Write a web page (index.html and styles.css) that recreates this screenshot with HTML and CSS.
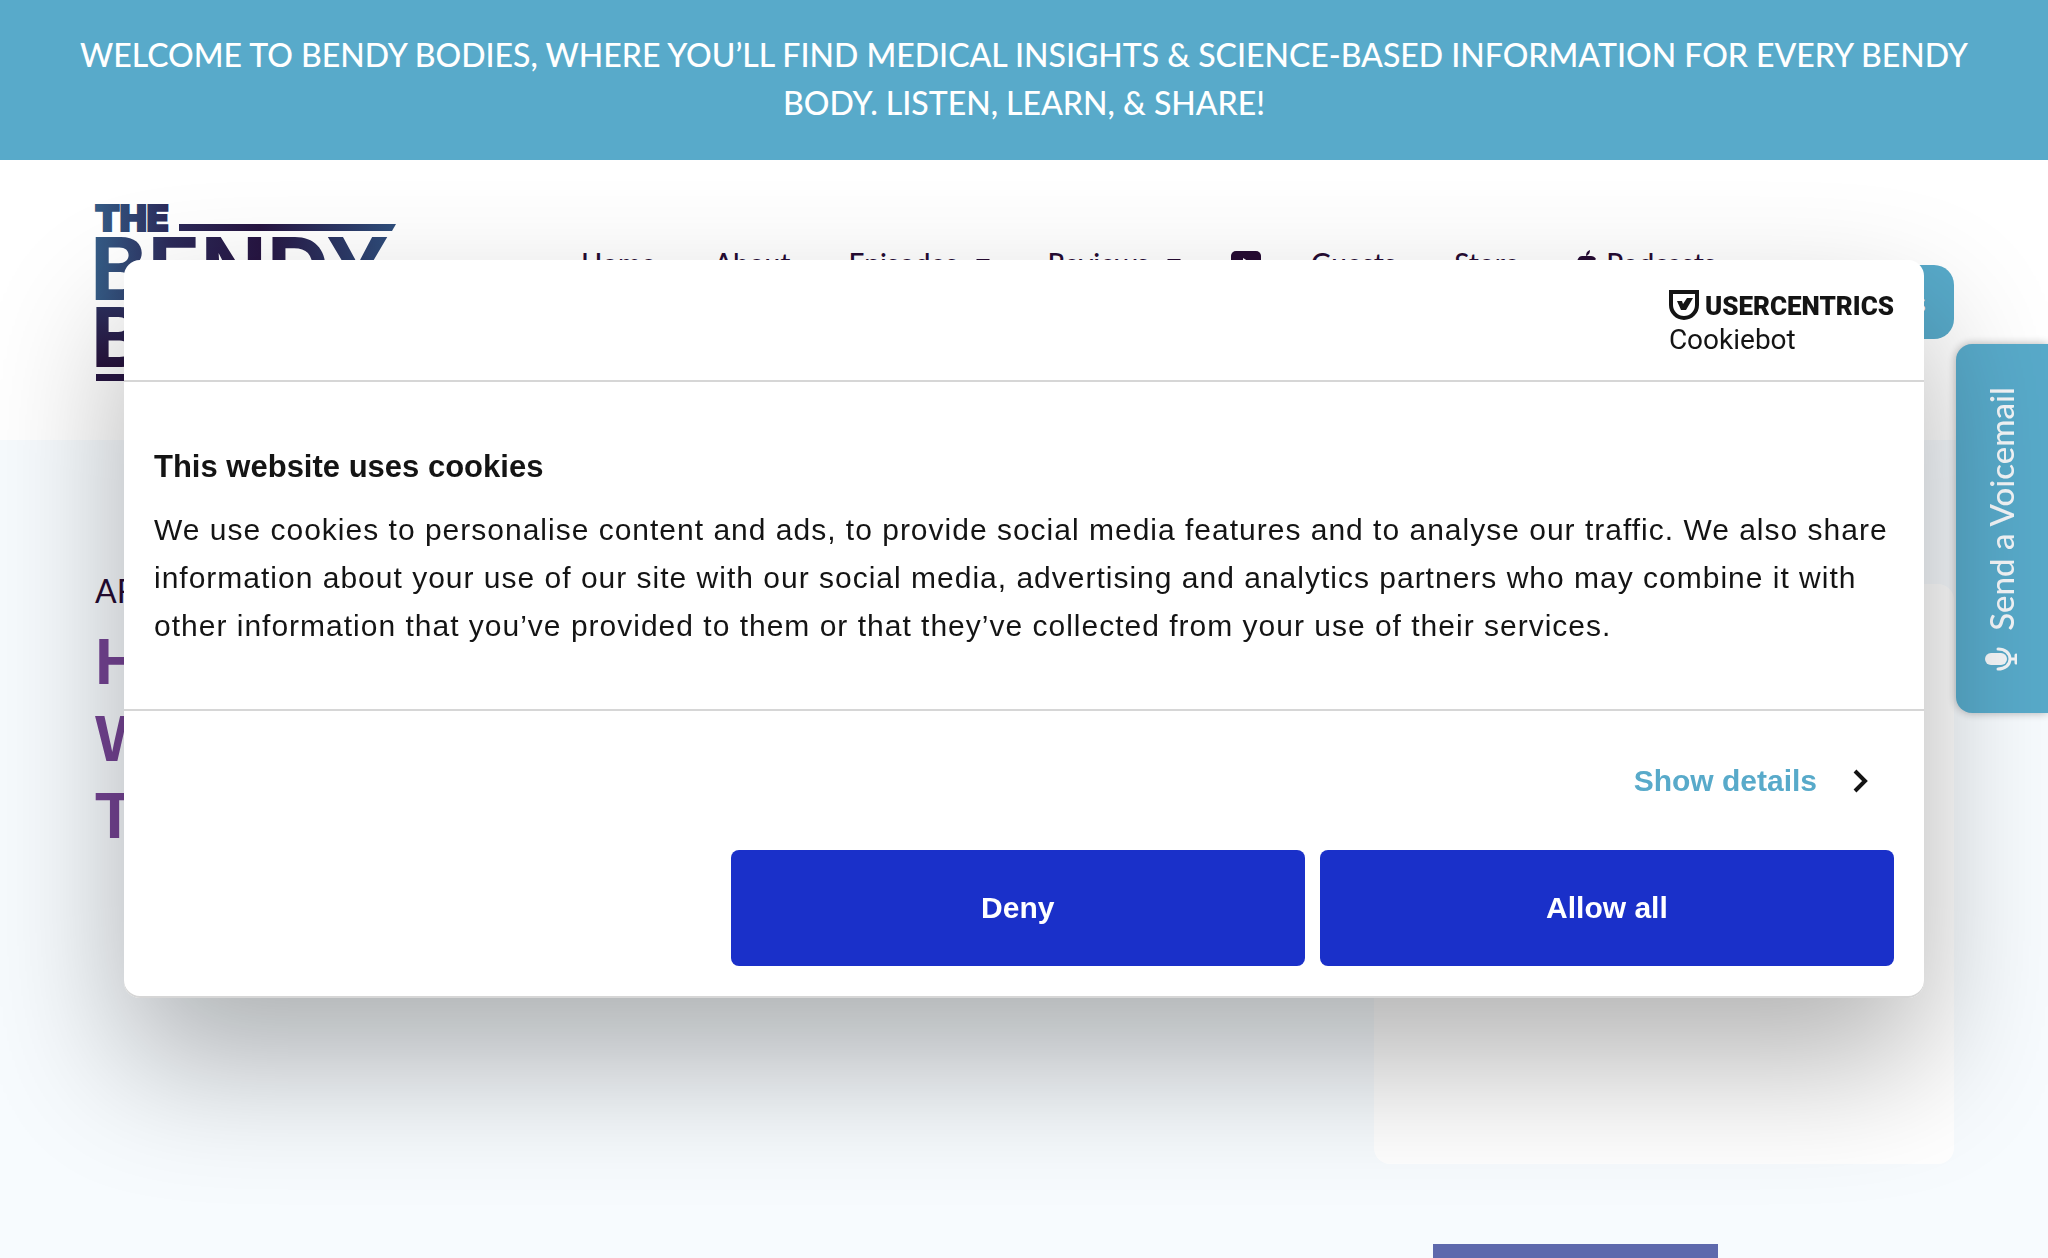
FILE: index.html
```html
<!DOCTYPE html>
<html lang="en">
<head>
<meta charset="utf-8">
<title>The Bendy Bodies Podcast</title>
<link rel="stylesheet" href="styles.css">
</head>
<body>
<div class="banner">WELCOME TO BENDY BODIES, WHERE YOU’LL FIND MEDICAL INSIGHTS &amp; SCIENCE-BASED INFORMATION FOR EVERY BENDY BODY. LISTEN, LEARN, &amp; SHARE!</div>
<header class="header">
  <a class="logo" href="#" aria-label="The Bendy Bodies">
    <svg width="304" height="180" viewBox="0 0 304 180">
      <defs>
        <linearGradient id="ink" gradientUnits="userSpaceOnUse" x1="0" y1="0" x2="300" y2="0">
          <stop offset="0" stop-color="#355c86"/><stop offset=".25" stop-color="#2c2a5a"/><stop offset=".55" stop-color="#271542"/><stop offset="1" stop-color="#2f4f7d"/>
        </linearGradient>
        <linearGradient id="ink-low" gradientUnits="userSpaceOnUse" x1="0" y1="104" x2="0" y2="168">
          <stop offset="0" stop-color="#2c2e5c"/><stop offset="1" stop-color="#271039"/>
        </linearGradient>
      </defs>
      <text class="logo-the" x="0" y="27" fill="url(#ink)" stroke="url(#ink)" stroke-width="2">THE</text>
      <path d="M84 20h217l-4 7H84z" fill="url(#ink)"/>
      <text class="logo-name" x="-5" y="96" fill="url(#ink)">BENDY</text>
      <text class="logo-name logo-low" x="-4" y="163" fill="url(#ink-low)">BODIES</text>
      <path d="M1 170h290v7H1z" fill="#271542"/>
    </svg>
  </a>
  <nav class="nav">
    <a href="#">Home</a>
    <a href="#">About</a>
    <a href="#">Episodes <i class="caret"></i></a>
    <a href="#">Reviews <i class="caret"></i></a>
    <a class="nav-icon" href="#" aria-label="YouTube"><svg width="30" height="24" viewBox="0 0 30 24"><rect width="30" height="24" rx="5" fill="#260b33"/><path d="M12 7l8 5-8 5z" fill="#fff"/></svg></a>
    <a href="#">Guests</a>
    <a href="#">Store</a>
    <a href="#"><svg class="apple" width="19" height="26" viewBox="0 0 19 26"><path d="M9 6C9 3 10 1 13 0c0 3-1 5-4 6zM5 6h9c2 0 4 1 5 3-3 2-3 7 0 9-2 5-4 7-6 7l-3-1-3 1c-4 0-7-6-7-11 0-5 2-8 5-8z" fill="#260b33"/></svg>Podcasts</a>
  </nav>
  <button class="follow" type="button">Follow Us</button>
</header>
<main class="hero">
  <div class="intro">
    <p class="kicker">ARTICLES</p>
    <h1 class="title">How<br>We<br>Talk</h1>
  </div>
  <aside class="side">
    <div class="card"></div>
    <div class="tile"></div>
  </aside>
</main>
<button class="voicemail" type="button">
  <svg width="32" height="24" viewBox="0 0 32 24"><rect x="0" y="6" width="22" height="12" rx="6" fill="#f4f6f8"/><path d="M13 2c7 0 12 4 12 10s-5 10-12 10M25 12h6M31 8v8" fill="none" stroke="#f4f6f8" stroke-width="3" stroke-linecap="round"/></svg>
  <span>Send a Voicemail</span>
</button>
<div class="dialog" role="dialog" aria-labelledby="cookie-title">
  <div class="dialog-head">
    <a class="vendor" href="#">
      <span class="vendor-top"><svg width="30" height="30" viewBox="0 0 30 30"><path d="M2 2h26v13a13 13 0 0 1-26 0z" fill="none" stroke="#141414" stroke-width="4"/><path d="M8 11h5l1 3 4-6h6l-7 12h-5z" fill="#141414"/></svg>USERCENTRICS</span>
      <span class="vendor-sub">Cookiebot</span>
    </a>
  </div>
  <div class="dialog-body">
    <h2 id="cookie-title">This website uses cookies</h2>
    <p>We use cookies to personalise content and ads, to provide social media features and to analyse our traffic. We also share information about your use of our site with our social media, advertising and analytics partners who may combine it with other information that you’ve provided to them or that they’ve collected from your use of their services.</p>
  </div>
  <div class="dialog-foot">
    <a class="details" href="#">Show details <svg width="16" height="24" viewBox="0 0 16 24"><path d="M2 2l10 10L2 22" fill="none" stroke="#141414" stroke-width="4"/></svg></a>
    <div class="actions">
      <button type="button">Deny</button>
      <button type="button">Allow all</button>
    </div>
  </div>
</div>
</body>
</html>
```
FILE: styles.css
```css
* { box-sizing: border-box; }
body {
  margin: 0;
  min-height: 100vh;
  display: flex;
  flex-direction: column;
  overflow: hidden;
  background: #f7fbfe;
  color: #260b33;
  font-family: "Noto Sans", sans-serif;
}
a { color: inherit; text-decoration: none; }
button { border: 0; font: inherit; cursor: pointer; }

.banner {
  padding: 31px 64px 33px;
  background: #58aaca;
  color: #fff;
  font-family: Lato, sans-serif;
  font-weight: 500;
  font-size: 32px;
  line-height: 48px;
  text-align: center;
}

.header {
  display: flex;
  align-items: flex-start;
  height: 280px;
  padding: 44px 94px 0 95px;
  background: #fff;
}
.logo svg { display: block; overflow: visible; }
.logo-the { font: 900 36px Inter, sans-serif; }
.logo-name { font: 700 87px Inter, sans-serif; }
.logo-low { font-size: 82px; }
.nav {
  display: flex;
  align-items: center;
  gap: 58px;
  height: 40px;
  margin: 39px auto 0 182px;
  font-family: Lato, sans-serif;
  font-weight: 500;
  font-size: 28px;
}
.nav a { display: flex; align-items: center; white-space: nowrap; }
.nav svg { display: block; }
.nav .nav-icon { margin: 0 -8px; }
.apple { margin-right: 10px; }
.caret {
  margin: 0 0 2px 18px;
  border: 7px solid transparent;
  border-top-color: #260b33;
  border-bottom: 0;
}
.follow {
  align-self: flex-start;
  height: 74px;
  margin-top: 61px;
  padding: 0 28px;
  border-radius: 20px;
  background: #58aaca;
  color: #fff;
  font-size: 24px;
}

.hero {
  flex: 1;
  display: flex;
  justify-content: space-between;
  padding: 127px 94px 0 95px;
}
.kicker { margin: 0; font-family: Lato, sans-serif; font-size: 32px; line-height: 48px; }
.title {
  margin: 9px 0 0;
  color: #754494;
  font: bold 64px/77px "Liberation Sans", Arial, sans-serif;
}
.side { width: 580px; padding-top: 17px; }
.card { height: 580px; border-radius: 16px; background: #fff; }
.tile { width: 285px; height: 14px; margin: 80px 0 0 59px; background: #5e69ad; }

.voicemail {
  position: fixed;
  top: 344px;
  right: 0;
  display: flex;
  flex-direction: column-reverse;
  align-items: center;
  gap: 16px;
  width: 92px;
  height: 369px;
  padding: 42px 3px 42px 0;
  border-radius: 16px 0 0 16px;
  background: #58aaca;
  box-shadow: 0 0 10px rgba(0, 0, 0, .3);
  color: #f4f6f8;
  font-family: Lato, sans-serif;
  font-weight: 500;
  font-size: 33px;
}
.voicemail span { writing-mode: vertical-rl; transform: rotate(180deg); line-height: 40px; }
.voicemail svg { flex: none; }

.dialog {
  position: fixed;
  top: 50%;
  left: 50%;
  width: calc(100% - 248px);
  transform: translate(-50%, -50%);
  border-radius: 16px;
  background: #fff;
  box-shadow: 0 64px 136px rgba(0, 0, 0, .3), inset 0 -2px #d6d6d6;
  color: #141414;
  font: 30px/48px "Liberation Sans", Arial, sans-serif;
}
.dialog-head {
  display: flex;
  justify-content: flex-end;
  height: 122px;
  padding: 30px;
  border-bottom: 2px solid #d6d6d6;
}
.vendor { display: flex; flex-direction: column; }
.vendor-top {
  display: flex;
  gap: 6px;
  height: 30px;
  font: 900 26px/32px Roboto, sans-serif;
}
.vendor-sub { font: 28px/40px Roboto, sans-serif; }
.dialog-body { padding: 61px 30px 59px; border-bottom: 2px solid #d6d6d6; }
.dialog-body h2 { margin: 0 0 15px; font-size: 31px; line-height: 48px; }
.dialog-body p { margin: 0; letter-spacing: 1px; }
.dialog-foot { padding: 46px 30px 32px; }
.details {
  display: flex;
  align-items: center;
  justify-content: flex-end;
  gap: 36px;
  padding-right: 25px;
  color: #58aaca;
  font-weight: bold;
}
.actions { display: flex; justify-content: flex-end; gap: 15px; margin-top: 45px; }
.actions button {
  width: 33%;
  height: 116px;
  border-radius: 8px;
  background: #1a30c9;
  color: #fff;
  font-weight: bold;
}
```
